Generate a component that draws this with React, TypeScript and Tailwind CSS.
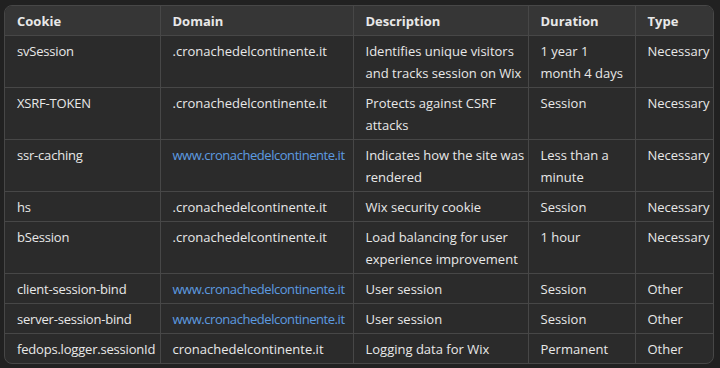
type Row = {
  name: string;
  domain: string;
  link?: boolean;
  desc: string[];
  dur: string[];
  type: string;
};

const rows: Row[] = [
  { name: "svSession", domain: ".cronachedelcontinente.it", desc: ["Identifies unique visitors", "and tracks session on Wix"], dur: ["1 year 1", "month 4 days"], type: "Necessary" },
  { name: "XSRF-TOKEN", domain: ".cronachedelcontinente.it", desc: ["Protects against CSRF", "attacks"], dur: ["Session"], type: "Necessary" },
  { name: "ssr-caching", domain: "www.cronachedelcontinente.it", link: true, desc: ["Indicates how the site was", "rendered"], dur: ["Less than a", "minute"], type: "Necessary" },
  { name: "hs", domain: ".cronachedelcontinente.it", desc: ["Wix security cookie"], dur: ["Session"], type: "Necessary" },
  { name: "bSession", domain: ".cronachedelcontinente.it", desc: ["Load balancing for user", "experience improvement"], dur: ["1 hour"], type: "Necessary" },
  { name: "client-session-bind", domain: "www.cronachedelcontinente.it", link: true, desc: ["User session"], dur: ["Session"], type: "Other" },
  { name: "server-session-bind", domain: "www.cronachedelcontinente.it", link: true, desc: ["User session"], dur: ["Session"], type: "Other" },
  { name: "fedops.logger.sessionId", domain: "cronachedelcontinente.it", desc: ["Logging data for Wix"], dur: ["Permanent"], type: "Other" },
];

// cells keep their own line breaks, like the source table
const cell = "pl-3 pr-1 pt-[4px] pb-[3px] align-top whitespace-nowrap overflow-hidden border-b border-r border-[#474747] last:border-r-0";

function Lines({ lines }: { lines: string[] }) {
  return (
    <>
      {lines.map((l) => (
        <div key={l}>{l}</div>
      ))}
    </>
  );
}

export default function App() {
  return (
    <div className="h-[368px] w-[720px] overflow-hidden bg-[#212121] pt-[5px] pl-[4px] font-['Open_Sans','Liberation_Sans',sans-serif] text-[13px] leading-[22px] text-[#e8e8e8]">
      <div className="w-[710px] rounded-lg border border-[#474747] overflow-hidden bg-[#2b2b2b]">
        <table className="w-full table-fixed border-collapse text-left">
          <colgroup>
            <col className="w-[155px]" />
            <col className="w-[193px]" />
            <col className="w-[175px]" />
            <col className="w-[107px]" />
            <col className="w-[78px]" />
          </colgroup>
          <thead className="bg-[#363636]">
            <tr>
              {["Cookie", "Domain", "Description", "Duration", "Type"].map((h) => (
                <th key={h} className={`${cell} font-bold`}>{h}</th>
              ))}
            </tr>
          </thead>
          <tbody>
            {rows.map((r, i) => (
              <tr key={r.name} className={i === rows.length - 1 ? "[&>td]:border-b-0" : ""}>
                <td className={`${cell} tracking-[-0.2px]`}>{r.name}</td>
                <td className={cell}>
                  {r.link ? (
                    <a className="text-[#5d9be0] tracking-[-0.45px]">{r.domain}</a>
                  ) : (
                    r.domain
                  )}
                </td>
                <td className={cell}><Lines lines={r.desc} /></td>
                <td className={cell}><Lines lines={r.dur} /></td>
                <td className={cell}>{r.type}</td>
              </tr>
            ))}
          </tbody>
        </table>
      </div>
    </div>
  );
}
